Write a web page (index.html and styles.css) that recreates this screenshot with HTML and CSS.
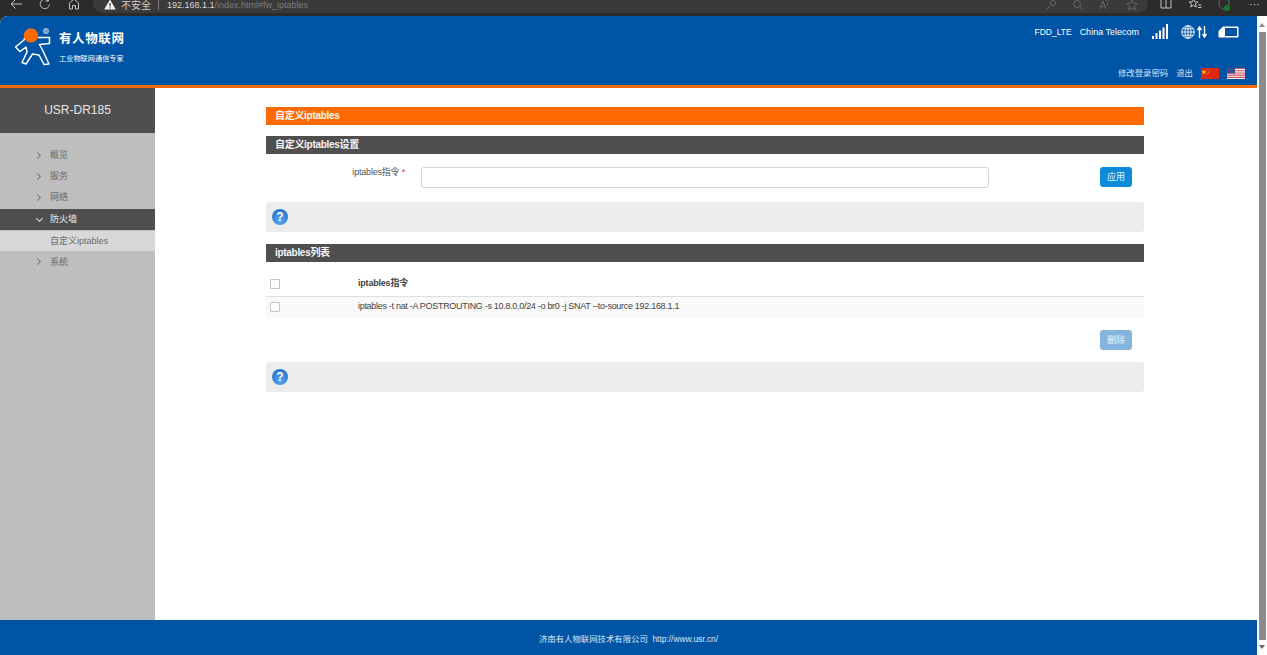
FILE: index.html
```html
<!DOCTYPE html>
<html lang="zh">
<head>
    <meta charset="UTF-8">
    <title>USR-DR185</title>
    <link rel="stylesheet" href="styles.css">
</head>
<body>
    <!-- browser toolbar, cut off at the top of the shot -->
    <div class="toolbar">
        <div class="nav-icons">
            <svg width="14" height="12" viewBox="0 0 14 12"><path d="M13 6H2M6.500 1.500 2 6l4.500 4.500" class="tb-line"/></svg>
            <svg width="14" height="12" viewBox="0 0 14 12"><path d="M11.500 6.500a4.700 4.700 0 1 1-1.500-4M10.500 0v3h-3" class="tb-line"/></svg>
            <svg width="14" height="12" viewBox="0 0 14 12"><path d="M2.500 11V5L7 1l4.500 4v6H8.500V7.500h-3V11z" class="tb-line"/></svg>
        </div>
        <div class="address">
            <svg width="12" height="11" viewBox="0 0 12 11"><path d="M6 .5 11.800 10.500H.2z" fill="#f2f2f2"/><path d="M5.400 4h1.200v3.500H5.400zM5.400 8.200h1.200v1.200H5.400z" fill="#2e2e2e"/></svg>
            <span class="insecure">不安全</span>
            <span class="address-sep"></span>
            <span class="url"><b>192.168.1.1</b>/index.html#fw_iptables</span>
            <div class="address-icons">
                <svg width="12" height="12" viewBox="0 0 12 12"><circle cx="8" cy="4" r="2.500" class="dim-line"/><path d="M6 6 1.500 10.500" class="dim-line"/></svg>
                <svg width="12" height="12" viewBox="0 0 12 12"><circle cx="5" cy="5" r="3.500" class="dim-line"/><path d="m7.500 7.500 3.500 3.500" class="dim-line"/></svg>
                <svg width="12" height="12" viewBox="0 0 12 12"><path d="m1 10 3-8 3 8M2 7.500h4M8.500 3.500v3M7.500 2l1-1 1 1" class="dim-line"/></svg>
                <svg width="12" height="12" viewBox="0 0 12 12"><path d="m6 .8 1.600 3.400 3.700.4-2.800 2.500.8 3.700L6 8.900l-3.300 1.900.8-3.700L.7 4.600l3.700-.4z" class="dim-line"/></svg>
            </div>
        </div>
        <div class="tool-icons">
            <svg width="14" height="12" viewBox="0 0 14 12"><path d="M2 1h10v9H2zM7 1v9" class="tb-line"/></svg>
            <svg width="14" height="12" viewBox="0 0 14 12"><path d="m5.500 1 1.300 3h3L7.500 6l.8 3-2.800-1.700L2.700 9l.8-3L1 4h3zM10 7h3.500M10 9.500h3.500" class="tb-line"/></svg>
            <span class="ext-icon">
                <svg width="14" height="12" viewBox="0 0 14 12"><path d="m7 .5 5 2v3.500c0 2.500-2 4-5 5.500-3-1.500-5-3-5-5.500V2.500z" class="dim-line"/></svg>
                <span class="ext-dot"></span>
            </span>
            <span class="more">···</span>
        </div>
    </div>

    <div class="window">
        <div class="page">
            <header class="header">
                <div class="logo">
                    <svg class="logo-mark" width="40" height="42" viewBox="0 0 40 42">
                        <path d="M12.500 6 10 14 1.500 21l4.500 4.500 6-4.500 1 5-5 10.500 4 1.500 6.500-10 6.500 1 5 9.500 5-.5-6-13-3.500-6.500 10-1V11.500H24" fill="none" stroke="#fff" stroke-width="1.500" stroke-linejoin="round"/>
                        <circle cx="17" cy="9.500" r="7.200" fill="#ff6a00"/>
                        <circle cx="32" cy="5" r="2.600" fill="#6f9fd0" stroke="#b9d0e8" stroke-width=".8"/>
                    </svg>
                    <div class="logo-text">
                        <div class="logo-name">有人物联网</div>
                        <div class="logo-slogan">工业物联网通信专家</div>
                    </div>
                </div>
                <div class="header-right">
                    <div class="status-row">
                        <span class="net-type">FDD_LTE</span>
                        <span class="carrier">China Telecom</span>
                        <svg class="signal" width="16" height="15" viewBox="0 0 16 15">
                            <path d="M0 12h2v3H0zM3.500 9h2v6h-2zM7 6.500h2V15H7zM10.500 3.500h2V15h-2zM14 0h2v15h-2z" fill="#fff"/>
                        </svg>
                        <svg class="globe" width="14" height="14" viewBox="0 0 14 14">
                            <g fill="none" stroke="#fff" stroke-width=".9">
                                <circle cx="7" cy="7" r="6.300"/>
                                <ellipse cx="7" cy="7" rx="3" ry="6.300"/>
                                <path d="M7 .7v12.600M.7 7h12.600M1.600 3.800h10.800M1.600 10.200h10.800"/>
                            </g>
                        </svg>
                        <svg class="updown" width="10" height="12" viewBox="0 0 10 12">
                            <path d="M2.500 12V2M.5 4l2-3 2 3M7.500 0v10M5.500 8l2 3 2-3" fill="none" stroke="#fff" stroke-width="1.400"/>
                        </svg>
                        <svg class="battery" width="21" height="12" viewBox="0 0 21 12">
                            <path d="M5 .5h14.500a1 1 0 0 1 1 1v9a1 1 0 0 1-1 1H1.500a1 1 0 0 1-1-1V5z" fill="#fff"/>
                            <path d="M7 2h11.500a.5.500 0 0 1 .5.500v7a.5.500 0 0 1-.5.500H7z" fill="#0054a6"/>
                        </svg>
                    </div>
                    <div class="account-row">
                        <a class="top-link">修改登录密码</a>
                        <a class="top-link">退出</a>
                        <svg class="flag" width="18" height="11" viewBox="0 0 18 11">
                            <rect width="18" height="11" fill="#de2910"/>
                            <path d="M3 1.500l.6 1.800h1.800L4 4.400l.5 1.800L3 5.100 1.500 6.200 2 4.400.6 3.300h1.800z" fill="#ffde00"/>
                            <path d="M6.500 1h.8v.8h-.8zM7.500 2.500h.8v.8h-.8zM7.500 4.200h.8V5h-.8zM6.500 5.500h.8v.8h-.8z" fill="#ffde00"/>
                        </svg>
                        <svg class="flag" width="18" height="11" viewBox="0 0 18 11">
                            <rect width="18" height="11" fill="#f4eeee"/>
                            <path d="M0 0h18v1.100H0zM0 2.200h18v1.100H0zM0 4.400h18v1.100H0zM0 6.600h18v1.100H0zM0 8.800h18V10H0z" fill="#d3566a"/>
                            <rect width="8" height="5.500" fill="#3f4d8c"/>
                        </svg>
                    </div>
                </div>
            </header>

            <div class="main">
                <aside class="sidebar">
                    <div class="device-name">USR-DR185</div>
                    <ul class="menu">
                        <li class="menu-item"><span class="chev"></span>概览</li>
                        <li class="menu-item"><span class="chev"></span>服务</li>
                        <li class="menu-item"><span class="chev"></span>网络</li>
                        <li class="menu-item active"><span class="chev down"></span>防火墙</li>
                        <li class="menu-sub">自定义iptables</li>
                        <li class="menu-item"><span class="chev"></span>系统</li>
                    </ul>
                </aside>

                <main class="content">
                    <div class="bar bar-orange">自定义iptables</div>

                    <div class="bar bar-dark">自定义iptables设置</div>
                    <div class="form-row">
                        <label class="form-label" for="cmd">iptables指令 <span class="req">*</span></label>
                        <input class="form-input" id="cmd" type="text">
                        <button class="btn">应用</button>
                    </div>
                    <div class="help-box"><span class="help-icon">?</span></div>

                    <div class="bar bar-dark">iptables列表</div>
                    <div class="table">
                        <div class="table-row table-head">
                            <span><input class="check" type="checkbox"></span>
                            <span class="cell-text">iptables指令</span>
                        </div>
                        <div class="table-row table-body">
                            <span><input class="check" type="checkbox"></span>
                            <span class="cell-text">iptables -t nat -A POSTROUTING -s 10.8.0.0/24 -o br0 -j SNAT --to-source 192.168.1.1</span>
                        </div>
                    </div>
                    <div class="action-row">
                        <button class="btn btn-disabled">删除</button>
                    </div>
                    <div class="help-box"><span class="help-icon">?</span></div>
                </main>
            </div>

            <footer class="footer">济南有人物联网技术有限公司&nbsp; http://www.usr.cn/</footer>
        </div>

        <div class="scrollbar">
            <span class="arrow-up"></span>
            <span class="thumb"></span>
            <span class="arrow-down"></span>
        </div>
    </div>
</body>
</html>
```

FILE: styles.css
```css
* {
    box-sizing: border-box;
}

html, body {
    height: 100%;
}

body {
    margin: 0;
    display: flex;
    flex-direction: column;
    overflow: hidden;
    background-color: #2b2b2b;
    font-family: "Liberation Sans", "Noto Sans CJK SC", sans-serif;
    font-size: 10px;
    color: #444;
}

/* browser toolbar */
.toolbar {
    height: 16px;
    display: flex;
    align-items: flex-start;
    background-color: #2b2b2b;
    flex-shrink: 0;
}

.tb-line {
    fill: none;
    stroke: #c4c4c4;
    stroke-width: 1;
}

.dim-line {
    fill: none;
    stroke: #666;
    stroke-width: 1;
}

.nav-icons {
    width: 93px;
    padding-left: 9px;
    display: flex;
    gap: 15px;
    margin-top: -2px;
}

.address {
    width: 1055px;
    height: 13px;
    display: flex;
    align-items: center;
    padding: 0 0 4px 11px;
    background-color: #3a3a3a;
    border-radius: 0 0 10px 10px;
    overflow: hidden;
}

.insecure {
    margin-left: 5px;
    color: #d0d0d0;
}

.address-sep {
    width: 1px;
    height: 11px;
    margin: 0 8px 0 7px;
    background-color: #777;
}

.url {
    color: #7c7c7c;
    font-size: 9px;
}

.url b {
    color: #d8d8d8;
    font-weight: normal;
}

.address-icons {
    margin-left: auto;
    display: flex;
    gap: 15px;
    padding-right: 10px;
}

.tool-icons {
    flex: 1;
    display: flex;
    align-items: center;
    gap: 15px;
    padding-left: 11px;
    margin-top: -2px;
}

.ext-icon {
    position: relative;
    display: flex;
}

.ext-dot {
    position: absolute;
    right: 1px;
    bottom: -1px;
    width: 6px;
    height: 6px;
    border-radius: 50%;
    background-color: #157a2e;
}

.more {
    margin-left: 3px;
    color: #c4c4c4;
    font-size: 11px;
    line-height: 12px;
}

/* page + scrollbar */
.window {
    flex: 1;
    display: flex;
    min-height: 0;
}

.page {
    flex: 1;
    display: flex;
    flex-direction: column;
    min-width: 0;
    background-color: #fff;
    border-radius: 8px 0 0 0;
    overflow: hidden;
}

.scrollbar {
    width: 10px;
    display: flex;
    flex-direction: column;
    align-items: center;
    background-color: #fff;
    padding: 7px 0 6px;
}

.thumb {
    flex: 1;
    width: 7px;
    margin: 5px 0 5px;
    background-color: #8c8c8c;
}

.arrow-up, .arrow-down {
    width: 0;
    height: 0;
    border-left: 3.500px solid transparent;
    border-right: 3.500px solid transparent;
}

.arrow-up {
    border-bottom: 4px solid #8c8c8c;
}

.arrow-down {
    border-top: 4px solid #666;
}

/* header */
.header {
    height: 72px;
    flex-shrink: 0;
    display: flex;
    justify-content: space-between;
    background-color: #0054a6;
    border-bottom: 3px solid #ff6a00;
    color: #fff;
}

.logo {
    display: flex;
    padding: 10px 0 0 14px;
}

.logo-text {
    margin-left: 5px;
}

.logo-name {
    margin-top: 5px;
    font-size: 12.500px;
    line-height: 16px;
    font-weight: bold;
    letter-spacing: .6px;
}

.logo-slogan {
    margin-top: 7px;
    font-size: 7.200px;
    line-height: 10px;
}

.header-right {
    display: flex;
    flex-direction: column;
    align-items: flex-end;
    justify-content: space-between;
    padding: 8px 12px 6px 0;
}

.status-row, .account-row {
    display: flex;
    align-items: center;
}

.status-row {
    padding-right: 6px;
    margin-right: -6px;
}

.carrier {
    margin-left: 8px;
    font-size: 9px;
}

.net-type {
    font-size: 8.500px;
}

.signal {
    margin-left: 13px;
}

.globe {
    margin-left: 13px;
}

.updown {
    margin-left: 2px;
}

.battery {
    margin-left: 11px;
    margin-right: 6px;
}

.account-row .top-link {
    margin: -4px 8px 0 0;
    font-size: 8.400px;
    color: #cfe3f7;
}

.account-row .flag + .flag {
    margin-left: 8px;
}

/* sidebar */
.main {
    flex: 1;
    display: flex;
    min-height: 0;
}

.sidebar {
    width: 155px;
    flex-shrink: 0;
    background-color: #bebebe;
}

.device-name {
    height: 45px;
    padding-top: 15px;
    background-color: #4f4f4f;
    color: #e6e6e6;
    font-size: 12px;
    line-height: 15px;
    text-align: center;
}

.menu {
    list-style: none;
    margin: 0;
    padding: 11.500px 0 0;
}

.menu-item, .menu-sub {
    height: 21.400px;
    display: flex;
    align-items: center;
    padding: 0 0 2px 50px;
    font-size: 9px;
    color: #6b6b6b;
    position: relative;
}

.menu-item.active {
    background-color: #4f4f4f;
    color: #f0f0f0;
}

.menu-sub {
    background-color: #d8d8d8;
    margin-top: 1px;
    height: 20.400px;
}

.chev {
    position: absolute;
    left: 35px;
    top: 8px;
    width: 5px;
    height: 5px;
    border-top: 1px solid #7a7a7a;
    border-right: 1px solid #7a7a7a;
    transform: rotate(45deg);
}

.chev.down {
    left: 37px;
    top: 7px;
    border-color: #ddd;
    transform: rotate(135deg);
}

/* content */
.content {
    width: 878px;
    margin-left: 111px;
    padding-top: 19px;
}

.bar {
    height: 18px;
    padding-left: 9px;
    font-size: 10px;
    line-height: 18px;
    font-weight: bold;
    letter-spacing: -.3px;
    color: #f5f5f5;
}

.bar-orange {
    background-color: #ff6a00;
    margin-bottom: 11px;
}

.bar-dark {
    background-color: #4f4f4f;
}

.form-row {
    display: flex;
    align-items: flex-start;
    padding: 13px 12px 0 0;
    height: 48px;
}

.form-label {
    width: 139px;
    line-height: 11px;
    font-size: 9px;
    letter-spacing: -.2px;
    text-align: right;
    color: #555;
}

.req {
    color: #c33;
}

.form-input {
    width: 568px;
    height: 21px;
    margin: 0 0 0 16px;
    border: 1px solid #d4d4d4;
    border-radius: 3px;
    background-color: #fff;
}

.btn {
    width: 32px;
    height: 20px;
    margin: 0 0 0 auto;
    padding: 0 0 2px;
    border: 0;
    border-radius: 3px;
    background-color: #0c8bd9;
    color: #e8f4fc;
    font-family: inherit;
    font-size: 9px;
}

.btn-disabled {
    background-color: #83b5de;
}

.help-box {
    height: 30px;
    display: flex;
    align-items: center;
    padding-left: 6px;
    background-color: #ececec;
    border-radius: 3px;
    margin-bottom: 12px;
}

.help-icon {
    width: 16px;
    height: 16px;
    border-radius: 50%;
    background: radial-gradient(circle at 50% 75%, #56a6ee, #1f68c0);
    color: #fff;
    font-size: 12px;
    line-height: 16px;
    font-weight: bold;
    text-align: center;
}

.table {
    padding-top: 10px;
}

.table-row {
    display: grid;
    grid-template-columns: 92px 1fr;
    align-items: center;
    font-size: 9px;
    color: #444;
}

.cell-text {
    margin-top: -3px;
    letter-spacing: -.3px;
}

.table-head {
    height: 25px;
    border-bottom: 1px solid #ddd;
    font-weight: bold;
}

.table-head .cell-text {
    letter-spacing: -.2px;
}

.table-body {
    height: 21px;
    background-color: #f9f9f9;
}

.table-body .check {
    margin-top: -2px;
}

.check {
    appearance: none;
    display: block;
    width: 10px;
    height: 10px;
    margin: 0 0 0 4px;
    border: 1px solid #c4c4c4;
    border-radius: 1px;
    background-color: #fff;
}

.action-row {
    display: flex;
    padding: 12px 12px 12px 0;
}

/* footer */
.footer {
    height: 35px;
    flex-shrink: 0;
    display: flex;
    align-items: center;
    justify-content: center;
    background-color: #0054a6;
    color: #dbe8f5;
    font-size: 8.400px;
}
```
